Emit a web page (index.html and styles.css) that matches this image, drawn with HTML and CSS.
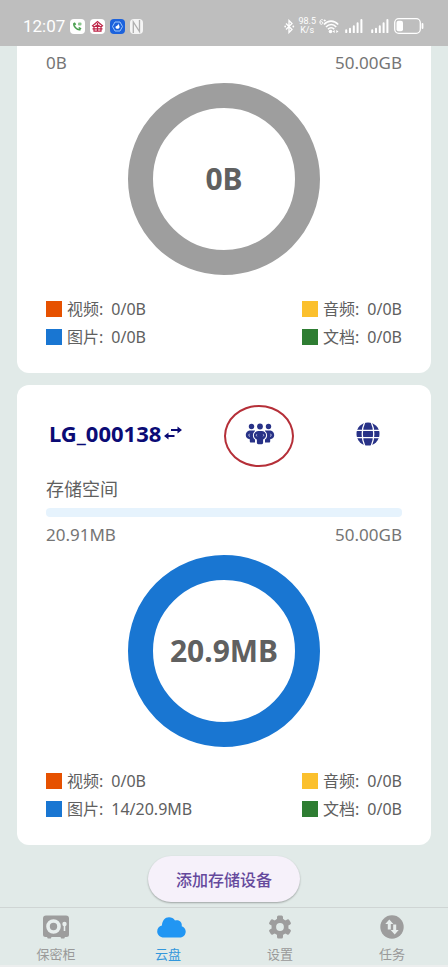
FILE: index.html
```html
<!DOCTYPE html>
<html lang="zh-CN">
<head>
<meta charset="utf-8">
<meta name="viewport" content="width=device-width, initial-scale=1">
<title>云盘</title>
<link rel="stylesheet" href="styles.css">
</head>
<body>
<header class="status">
  <div class="status-left">
    <span class="clock">12:07</span>
    <svg class="app" width="15" height="15" viewBox="0 0 15 15" aria-hidden="true">
      <rect width="15" height="15" rx="4" fill="#fff"/>
      <path d="M4.2 4.2c-1.6 2.6 3 7.500 6.200 6.500" fill="none" stroke="#4a9f4f" stroke-width="1.500"/>
      <path d="M3.500 4.300l1.300-1 1.400 2-1.200 1.100zM8.200 9.100l1-1.200 2.300 1.300-1 1.600z" fill="#4a9f4f"/>
      <rect x="8" y="3.500" width="3.500" height="3" rx="1" fill="#8cc58f"/>
    </svg>
    <svg class="app" width="15" height="15" viewBox="0 0 15 15" aria-hidden="true">
      <rect width="15" height="15" rx="4" fill="#fff"/>
      <path d="M2 7.200L7.500 2.500 13 7.200M3 7.500h9M4 8v4.200h7V8M2.500 9.800h10M7.500 4v8M5.500 6l2 1.500 2-1.500" fill="none" stroke="#bd2447" stroke-width="1.200"/>
    </svg>
    <svg class="app" width="15" height="15" viewBox="0 0 15 15" aria-hidden="true">
      <rect width="15" height="15" rx="4" fill="#1c62dc"/>
      <path d="M5 3h5l2.500 4.500L10 12H5L2.500 7.500z" fill="none" stroke="#9cc7fa" stroke-width="1"/>
      <path d="M8.300 4.500c.2 1.500 1.700 2.500 1.200 4C9 10.400 5.700 10.300 5.500 8.300c0-.8.5-1.200 1-1.300.9 0 1.500-1 1.800-2.500z" fill="#fff"/>
    </svg>
    <svg class="nfc" width="13" height="15" viewBox="0 0 13 15" aria-hidden="true">
      <rect width="13" height="15" rx="4" fill="#f5f5f5"/>
      <path d="M3.300 14V3l6.200 9.500V1" fill="none" stroke="#b0b0b0" stroke-width="1.300"/>
    </svg>
  </div>
  <div class="status-right">
    <svg width="11" height="15" viewBox="0 0 11 15" aria-hidden="true">
      <path d="M2 4.500l6 6-3 3v-12l3 3-6 6" fill="none" stroke="#fff" stroke-width="1.300"/>
      <circle cx="1.200" cy="7.500" r=".9" fill="#fff"/><circle cx="9.300" cy="7.500" r=".9" fill="#fff"/>
    </svg>
    <span class="speed">98.5<br>K/s</span>
    <svg width="20" height="16" viewBox="0 0 20 16" aria-hidden="true">
      <path d="M3.800 1.700C1.500 1.300.8 3 .9 4.700c.2 2.200 3 2 2.900.2C3.700 3.300 1.700 3.400 1 4.600M4.700 2.500h2M5.700 1.500v2" fill="none" stroke="#fff"/>
      <path d="M5 6.500c4-4.500 10-4.500 14.200 0M7 9c3-3.300 7.500-3.300 10.200 0M9 11.300c1.800-2 4.500-2 6.200 0" fill="none" stroke="#fff" stroke-width="1.600"/>
      <circle cx="11.500" cy="13.500" r="1.800" fill="#fff"/>
      <path d="M13.500 13.500l2.200-1.600v3.200zM19.500 13.500l-2.200-1.600v3.200z" fill="#fff"/>
    </svg>
    <svg class="signal" width="18" height="14" viewBox="0 0 18 14" aria-hidden="true">
      <path d="M1.200 13.300v-2M5 13.300V9.700M8.800 13.300V7.200M12.600 13.300V4.300M16.400 13.300V1" stroke="#fff" stroke-width="2" stroke-linecap="round"/>
    </svg>
    <svg class="signal" width="18" height="14" viewBox="0 0 18 14" aria-hidden="true">
      <path d="M1.200 13.300v-2M5 13.300V9.700M8.800 13.300V7.200M12.600 13.300V4.300M16.400 13.300V1" stroke="#fff" stroke-width="2" stroke-linecap="round"/>
    </svg>
    <svg width="30" height="16" viewBox="0 0 30 16" aria-hidden="true">
      <rect x=".7" y=".7" width="25.600" height="14.600" rx="4" fill="none" stroke="#fff" stroke-width="1.300"/>
      <rect x="2.500" y="2.700" width="6.500" height="10.600" rx="2" fill="#fff"/>
      <path d="M28.500 6v4" stroke="#fff" stroke-width="1.800" stroke-linecap="round"/>
    </svg>
  </div>
</header>

<main>
  <section class="card card-scrolled">
    <div class="usage"><span>0B</span><span>50.00GB</span></div>
    <div class="donut donut-empty">0B</div>
    <div class="legend">
      <dl>
        <div class="entry video"><dt>视频:</dt><dd>0/0B</dd></div>
        <div class="entry image"><dt>图片:</dt><dd>0/0B</dd></div>
      </dl>
      <dl>
        <div class="entry audio"><dt>音频:</dt><dd>0/0B</dd></div>
        <div class="entry document"><dt>文档:</dt><dd>0/0B</dd></div>
      </dl>
    </div>
  </section>

  <section class="card">
    <div class="device">
      <button class="name" type="button">LG_000138
        <svg width="18" height="14" viewBox="0 0 18 14" aria-hidden="true">
          <path d="M7 4h8M3 10h7.500" stroke="#0b0b75" stroke-width="1.800" fill="none"/>
          <path d="M18 4l-4.500-3.500v7zM0 10l4.500-3.500v7z" fill="#0b0b75"/>
        </svg>
      </button>
      <button class="icon-button members" type="button" aria-label="成员">
        <svg width="30" height="22" viewBox="0 0 30 22" aria-hidden="true">
          <g fill="#283287">
            <circle cx="6.500" cy="3.500" r="2.700"/><circle cx="15" cy="3.500" r="2.900"/><circle cx="23.500" cy="3.500" r="2.700"/>
            <path d="M5.500 7.500h4.500v12H6c-.8 0-1.200-.4-1.200-1.200v-2C2.500 15.800.8 14.300.8 12.200.8 9.600 2.800 7.500 5.500 7.500z"/>
            <path d="M24.500 7.500H20v12h4c.8 0 1.200-.4 1.200-1.200v-2c2.300-.5 4-2 4-4.100 0-2.600-2-4.700-4.700-4.700z"/>
            <path d="M13.500 8h3c2.700 0 4.600 1.900 4.600 4.300 0 1.900-1.300 3.600-3 4.200v3.300c0 .9-.5 1.400-1.400 1.400h-3.400c-.9 0-1.400-.5-1.400-1.400v-3.300c-1.700-.6-3-2.300-3-4.200C8.900 9.900 10.800 8 13.500 8z" stroke="#fff" stroke-width="2" paint-order="stroke"/>
          </g>
          <path d="M4.500 10.800c-.7.900-.7 2 0 2.800M25.500 10.800c.7.900.7 2 0 2.800M11.800 11.300c-.6.600-.6 1.400 0 2M18.200 11.300c.6.600.6 1.400 0 2" fill="none" stroke="#dfe1f2" stroke-width=".9"/>
        </svg>
        <span class="ring"></span>
      </button>
      <button class="icon-button network" type="button" aria-label="网络">
        <svg width="24" height="24" viewBox="0 0 24 24" aria-hidden="true">
          <circle cx="12" cy="12" r="11.500" fill="#283287"/>
          <path d="M0 8.300h24M0 15.700h24M8.800 0C5.400 7 5.400 17 8.800 24M15.200 0c3.400 7 3.400 17 0 24" fill="none" stroke="#fff" stroke-width="1.300"/>
        </svg>
      </button>
    </div>
    <label class="space-label" for="space">存储空间</label>
    <progress class="space" id="space" value="0" max="50"></progress>
    <div class="usage"><span>20.91MB</span><span>50.00GB</span></div>
    <div class="donut">20.9MB</div>
    <div class="legend">
      <dl>
        <div class="entry video"><dt>视频:</dt><dd>0/0B</dd></div>
        <div class="entry image"><dt>图片:</dt><dd>14/20.9MB</dd></div>
      </dl>
      <dl>
        <div class="entry audio"><dt>音频:</dt><dd>0/0B</dd></div>
        <div class="entry document"><dt>文档:</dt><dd>0/0B</dd></div>
      </dl>
    </div>
  </section>

  <button class="add" type="button">添加存储设备</button>
</main>

<nav class="tabs">
  <a href="#safe">
    <svg width="28" height="24" viewBox="0 0 28 24" aria-hidden="true">
      <path d="M4 .5h20a3 3 0 0 1 3 3v16a2.500 2.500 0 0 1-2.500 2.500H23l-.8 1.500h-3L18.500 22h-9l-.7 1.500h-3L5 22H3.500A2.500 2.500 0 0 1 1 19.500v-16a3 3 0 0 1 3-3z" fill="#9d9d9d"/>
      <circle cx="11.500" cy="11.500" r="5.500" fill="none" stroke="#e8eeed" stroke-width="3.600"/>
      <circle cx="22.500" cy="9" r="2.200" fill="#e8eeed"/><path d="M22.500 9v7" stroke="#e8eeed" stroke-width="1.600"/>
    </svg>
    <span>保密柜</span>
  </a>
  <a class="current" href="#cloud" aria-current="page">
    <svg width="36" height="24" viewBox="0 0 36 24" aria-hidden="true">
      <path d="M14 22.500c-4 0-6.800-2.700-6.800-6 0-3 1.900-5.200 4.700-5.900C12.200 5.800 15 2.300 19 2.300c2.500 0 4.700 1.200 6 3.200 3.300-1 6.800 1 6.800 4.600 0 .4 0 .9-.1 1.200 2.300.8 4 2.700 4 5.200 0 3.400-2.400 6-6 6z" fill="#2196f3"/>
    </svg>
    <span>云盘</span>
  </a>
  <a href="#settings">
    <svg width="24" height="24" viewBox="0 0 24 24" aria-hidden="true">
      <g fill="#9d9d9d">
        <circle cx="12" cy="12" r="8.500"/>
        <rect x="9" y=".5" width="6" height="23" rx="1.500"/>
        <rect x="9" y=".5" width="6" height="23" rx="1.500" transform="rotate(60 12 12)"/>
        <rect x="9" y=".5" width="6" height="23" rx="1.500" transform="rotate(120 12 12)"/>
      </g>
      <circle cx="12" cy="12" r="3.900" fill="#e1eae8"/>
    </svg>
    <span>设置</span>
  </a>
  <a href="#tasks">
    <svg width="24" height="24" viewBox="0 0 24 24" aria-hidden="true">
      <circle cx="12" cy="12" r="11.700" fill="#9d9d9d"/>
      <path d="M9.300 4.500l4 4.500h-2.500v5.500h-3V9H5.300zM14.700 19.500l-4-4.500h2.500V9.500h3V15h2.500z" fill="#e8eeed"/>
    </svg>
    <span>任务</span>
  </a>
</nav>
</body>
</html>
```
FILE: styles.css
```css
* {
  box-sizing: border-box;
}

body {
  display: flex;
  flex-direction: column;
  min-height: 100vh;
  margin: 0;
  background: #e1eae8;
  color: #606060;
  font-family: "Noto Sans", "Noto Sans CJK SC", sans-serif;
  font-size: 16px;
}

button {
  padding: 0;
  border: 0;
  background: none;
  font: inherit;
}

svg {
  display: block;
  flex: none;
}

/* Status bar */

.status {
  display: flex;
  justify-content: space-between;
  height: 46px;
  padding: 6px 24px 0 23px;
  background: #bebebe;
  color: #fff;
  font-family: Roboto, sans-serif;
}

.status-left,
.status-right {
  display: flex;
  align-items: center;
}

.status-left {
  gap: 5px;
}

.status-right {
  gap: 3px;
}

.clock {
  font-size: 17px;
}

.speed {
  font-size: 9px;
  line-height: 9px;
  text-align: center;
}

.signal {
  margin: 0 2px 0 3px;
}

/* Storage cards */

main {
  display: flex;
  flex: 1;
  flex-direction: column;
  padding: 0 17px 5px;
}

.card {
  margin-bottom: 11px;
  padding: 20px 29px 22px;
  border-radius: 12px;
  background: #fff;
}

.card-scrolled {
  margin-bottom: 12px;
  padding-top: 5px;
  border-radius: 0 0 12px 12px;
}

.device {
  display: flex;
  align-items: center;
  height: 58px;
  gap: 38px;
}

.name {
  display: flex;
  flex: 1;
  align-items: center;
  gap: 3px;
  padding: 0 0 3px 3px;
  color: #0b0b75;
  font-size: 22px;
  font-weight: 700;
  line-height: 30px;
}

.icon-button {
  display: grid;
  place-items: center;
  height: 58px;
}

.members {
  position: relative;
  width: 72px;
}

.network {
  width: 68px;
}

.ring {
  position: absolute;
  top: 0;
  left: 0;
  width: 70px;
  height: 62px;
  border: 2px solid #b52f38;
  border-radius: 50%;
}

.space-label {
  display: block;
  margin-top: 13px;
  font-size: 18px;
  line-height: 26px;
}

.space {
  display: block;
  width: 100%;
  height: 9px;
  margin: 6px 0;
  overflow: hidden;
  border: 0;
  border-radius: 4px;
  appearance: none;
  background: #e6f3fd;
}

.space::-webkit-progress-bar {
  background: #e6f3fd;
}

.space::-webkit-progress-value {
  background: #1976d2;
}

.usage {
  display: flex;
  justify-content: space-between;
  color: #757575;
  font-size: 17px;
  line-height: 24px;
}

.donut {
  display: grid;
  place-items: center;
  width: 192px;
  height: 192px;
  margin: 8px auto 20px;
  padding-bottom: 2px;
  border: 25px solid #1976d2;
  border-radius: 50%;
  font-size: 30px;
  font-weight: 700;
}

.donut-empty {
  border-color: #9e9e9e;
}

.legend {
  display: flex;
  justify-content: space-between;
}

.legend dl {
  margin: 0;
}

.entry {
  display: flex;
  align-items: center;
  line-height: 28px;
}

.entry::before {
  width: 16px;
  height: 16px;
  margin-right: 5px;
  background: var(--swatch);
  content: "";
}

.entry dd {
  margin-left: 8px;
}

.video { --swatch: #e65100; }
.image { --swatch: #1976d2; }
.audio { --swatch: #fbc02d; }
.document { --swatch: #2e7d32; }

.add {
  align-self: center;
  height: 46px;
  padding: 0 28px;
  border-radius: 23px;
  background: #f6f1fa;
  box-shadow: 0 1px 2px rgb(0 0 0 / 30%);
  color: #65499c;
  font-weight: 500;
}

/* Bottom tabs */

.tabs {
  display: grid;
  grid-template-columns: repeat(4, 1fr);
  height: 60px;
  padding-top: 7px;
  border-top: 1px solid #cfd5d4;
  border-bottom: 2px solid #eceeee;
}

.tabs a {
  display: flex;
  flex-direction: column;
  align-items: center;
  gap: 5px;
  color: #999;
  font-size: 13px;
  line-height: 20px;
  text-decoration: none;
}

.tabs .current {
  color: #3297dc;
}
```
